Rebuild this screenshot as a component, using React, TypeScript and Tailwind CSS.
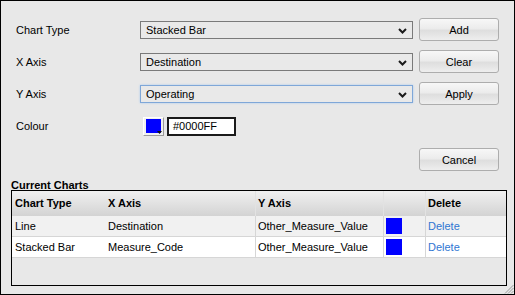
import React from "react";

const font = { fontFamily: '"Liberation Sans", Arial, sans-serif' };

function Chevron() {
  return (
    <svg width="9" height="6" viewBox="0 0 9 6" className="absolute right-[5px] top-[6px]">
      <polyline points="1,1 4.5,4.5 8,1" fill="none" stroke="#1a1a1a" strokeWidth="2" />
    </svg>
  );
}

function Select({ value, focused }: { value: string; focused?: boolean }) {
  return (
    <div
      className={
        "relative h-[18px] w-[273px] bg-[#e9e9e9] pl-[5px] text-[11px] leading-[17px] text-black " +
        (focused
          ? "border border-[#7fa7d8] shadow-[0_0_2px_#a9c9ef]"
          : "border border-[#7a7a7a]")
      }
    >
      {value}
      <Chevron />
    </div>
  );
}

function Button({ label }: { label: string }) {
  return (
    <div className="flex h-[23px] w-[80px] items-center justify-center rounded-[3px] border border-[#adadad] bg-[linear-gradient(#f7f7f7_0%,#ececec_45%,#dedede_55%,#eeeeee_100%)] pt-[1px] text-[11px] text-black">
      {label}
    </div>
  );
}

function Row({ label, children, button }: { label: string; children: React.ReactNode; button?: string }) {
  return (
    <div className="flex h-[23px] items-center">
      <div className="w-[124px] pt-[2px] text-[11px] text-black">{label}</div>
      {children}
      {button && <div className="ml-[6px]"><Button label={button} /></div>}
    </div>
  );
}

const rows = [
  { type: "Line", x: "Destination", y: "Other_Measure_Value", bg: "bg-[#f1f1f1]" },
  { type: "Stacked Bar", x: "Measure_Code", y: "Other_Measure_Value", bg: "bg-white" },
];

export default function App() {
  return (
    <div style={font} className="relative h-[295px] w-[515px] border border-black bg-[#e8e8e8]">
      <div className="flex flex-col gap-[9px] pl-[15px] pt-[17px]">
        <Row label="Chart Type" button="Add">
          <Select value="Stacked Bar" />
        </Row>
        <Row label="X Axis" button="Clear">
          <Select value="Destination" />
        </Row>
        <Row label="Y Axis" button="Apply">
          <Select value="Operating" focused />
        </Row>
        <Row label="Colour">
          <div className="relative ml-[3px] mt-[1px] h-[19px] w-[21px] border border-b-[#9a9a9a] border-l-white border-r-[#9a9a9a] border-t-white bg-[#f0f0f0]">
            <div className="absolute left-[2px] top-[1px] h-[14px] w-[15px] bg-[#0000ff]" />
            <svg width="5" height="3" viewBox="0 0 5 3" className="absolute bottom-[1px] right-[1px]">
              <polygon points="0,0 5,0 2.5,3" fill="#111" />
            </svg>
          </div>
          <div className="ml-[3px] mt-[1px] flex h-[19px] w-[69px] items-center border-2 border-[#1a1a1a] bg-white pl-[4px] text-[11px] text-black">
            #0000FF
          </div>
        </Row>
      </div>
      <div className="mt-[11px] flex justify-end pr-[15px]">
        <Button label="Cancel" />
      </div>
      <div className="mt-[7px] pl-[10px]">
        <div className="h-[12px] pt-[1px] text-[11px] font-bold leading-[12px] text-black">Current Charts</div>
        <div className="h-[96px] w-[496px] border border-black bg-[#e8e8e8]">
          <div className="grid h-[25px] grid-cols-[93px_150px_128px_42px_80px] bg-[linear-gradient(#f0f0f0,#d3d3d3)] text-[11px] font-bold text-black">
            <div className="flex items-center pl-[3px]">Chart Type</div>
            <div className="flex items-center pl-[3px]">X Axis</div>
            <div className="flex items-center border-l border-[#e2e2e2] pl-[2px]">Y Axis</div>
            <div className="border-l border-[#e2e2e2]" />
            <div className="flex items-center border-l border-[#e2e2e2] pl-[2px]">Delete</div>
          </div>
          {rows.map((r) => (
            <div
              key={r.type}
              className={"grid h-[21px] grid-cols-[93px_150px_128px_42px_80px] border-b border-[#d6d6d6] text-[11px] text-black " + r.bg}
            >
              <div className="flex items-center pl-[3px]">{r.type}</div>
              <div className="flex items-center pl-[3px]">{r.x}</div>
              <div className="flex items-center border-l border-[#d6d6d6] pl-[2px]">{r.y}</div>
              <div className="flex items-center border-l border-[#d6d6d6] pl-[2px]">
                <div className="h-[16px] w-[16px] bg-[#0000ff]" />
              </div>
              <div className="flex items-center border-l border-[#d6d6d6] pl-[2px] text-[#2f76d2]">Delete</div>
            </div>
          ))}
        </div>
      </div>
      <svg width="11" height="11" viewBox="0 0 11 11" className="absolute bottom-0 right-0">
        <g stroke="#9a9a9a" strokeWidth="1">
          <line x1="10.5" y1="2" x2="2" y2="10.5" />
          <line x1="10.5" y1="5" x2="5" y2="10.5" />
          <line x1="10.5" y1="8" x2="8" y2="10.5" />
        </g>
      </svg>
    </div>
  );
}
